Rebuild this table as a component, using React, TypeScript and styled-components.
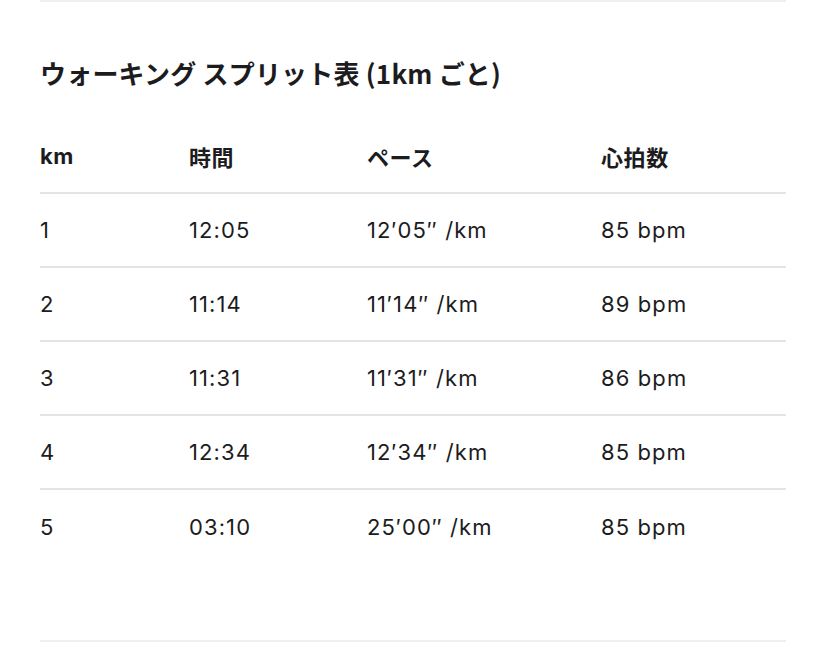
import React from "react";
import styled, { createGlobalStyle } from "styled-components";

const GlobalStyle = createGlobalStyle`
  html, body {
    margin: 0;
    padding: 0;
    background: #ffffff;
  }
  body {
    font-family: Inter, "Noto Sans CJK JP", sans-serif;
    color: #1c1c1e;
    -webkit-font-smoothing: antialiased;
  }
`;

const Page = styled.div`
  padding: 0 42px 0 40px;
`;

const Rule = styled.div<{ $top?: number }>`
  height: 2px;
  background: #efefef;
  margin-top: ${({ $top }) => $top ?? 0}px;
`;

const Title = styled.h2`
  margin: 55px 0 31px;
  font-size: 26px;
  line-height: 32px;
  font-weight: 700;
  font-family: "Noto Sans CJK JP", sans-serif;
  letter-spacing: 0.2px;
`;

const Row = styled.div<{ $last?: boolean }>`
  display: grid;
  grid-template-columns: 149px 178px 234px 1fr;
  align-items: center;
  height: 74px;
  box-sizing: border-box;
  border-bottom: ${({ $last }) => ($last ? "none" : "2px solid #e4e4e4")};
`;

const HeadCell = styled.div`
  font-size: 22px;
  font-weight: 700;
  letter-spacing: 0.6px;
  font-family: Inter, "Noto Sans CJK JP", sans-serif;
`;

const Cell = styled.div`
  font-size: 22px;
  font-weight: 400;
  letter-spacing: 1.1px;
`;

const headers = ["km", "時間", "ペース", "心拍数"];

const splits = [
  { km: "1", time: "12:05", pace: "12′05″ /km", hr: "85 bpm" },
  { km: "2", time: "11:14", pace: "11′14″ /km", hr: "89 bpm" },
  { km: "3", time: "11:31", pace: "11′31″ /km", hr: "86 bpm" },
  { km: "4", time: "12:34", pace: "12′34″ /km", hr: "85 bpm" },
  { km: "5", time: "03:10", pace: "25′00″ /km", hr: "85 bpm" },
];

export default function App() {
  return (
    <>
      <GlobalStyle />
      <Page>
        <Rule />
        <Title>ウォーキング スプリット表 (1km ごと)</Title>
        <Row>
          {headers.map((h) => (
            <HeadCell key={h}>{h}</HeadCell>
          ))}
        </Row>
        {splits.map((s, i) => (
          <Row key={s.km} $last={i === splits.length - 1}>
            <Cell>{s.km}</Cell>
            <Cell>{s.time}</Cell>
            <Cell>{s.pace}</Cell>
            <Cell>{s.hr}</Cell>
          </Row>
        ))}
        <Rule $top={76} />
      </Page>
    </>
  );
}
